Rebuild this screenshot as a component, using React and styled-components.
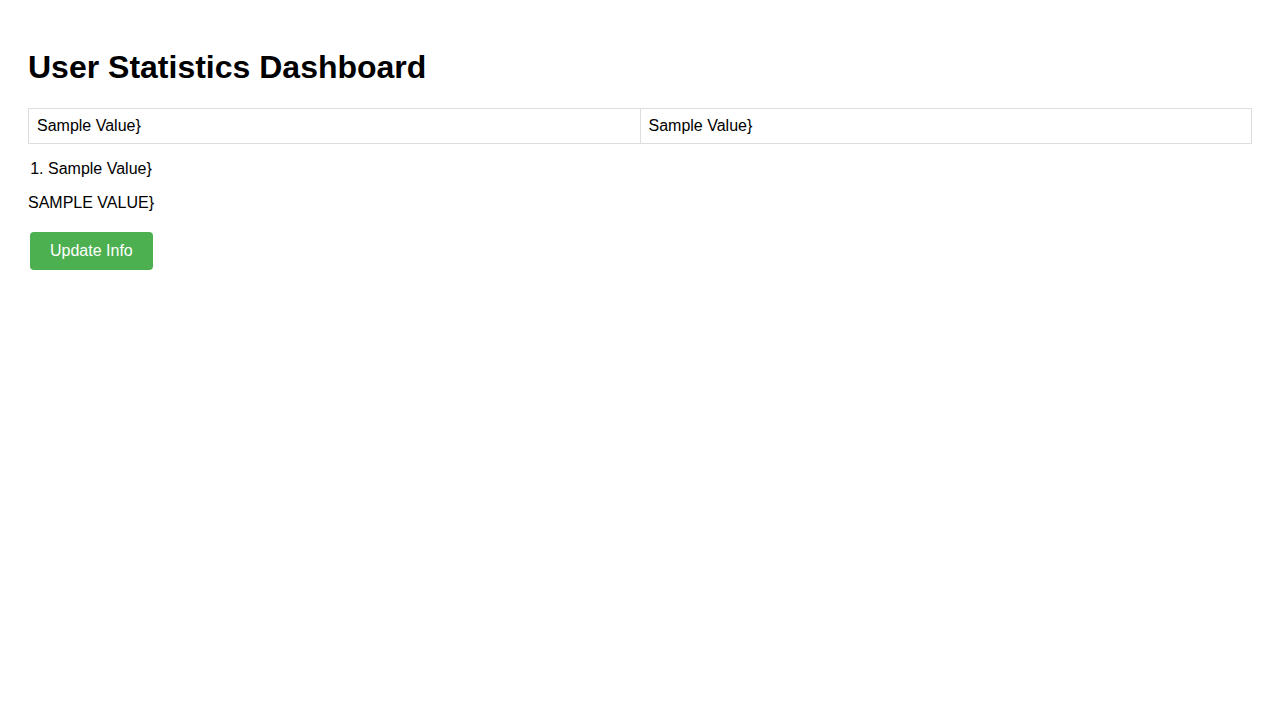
import React from "react";
import styled, { createGlobalStyle } from "styled-components";

const Global = createGlobalStyle`
  body {
    margin: 0;
    background: #ffffff;
    font-family: "Liberation Sans", Arial, sans-serif;
    color: #000;
  }
`;

const Page = styled.div`
  padding: 28px;
`;

const Title = styled.h1`
  font-size: 32px;
  font-weight: bold;
  margin: 21px 0 22px;
  line-height: 37px;
`;

const Table = styled.table`
  width: 100%;
  border-collapse: collapse;
  table-layout: fixed;
`;

const Cell = styled.td`
  border: 1px solid #ddd;
  padding: 8px;
  font-size: 16px;
  line-height: 18px;
`;

const List = styled.ol`
  margin: 16px 0 16px;
  padding-left: 20px;
  font-size: 16px;
  line-height: 18px;
`;

const Upper = styled.p`
  margin: 0;
  text-transform: uppercase;
  font-size: 16px;
  line-height: 18px;
`;

const Button = styled.button`
  margin: 20px 0 0 2px;
  background: #4caf50;
  color: #fff;
  border: none;
  border-radius: 4px;
  padding: 10px 20px;
  font-family: "Liberation Sans", Arial, sans-serif;
  font-size: 16px;
  line-height: 18px;
  cursor: pointer;
`;

export default function App() {
  return (
    <>
      <Global />
      <Page>
        <Title>User Statistics Dashboard</Title>
        <Table>
          <tbody>
            <tr>
              <Cell>Sample Value{"}"}</Cell>
              <Cell>Sample Value{"}"}</Cell>
            </tr>
          </tbody>
        </Table>
        <List>
          <li>Sample Value{"}"}</li>
        </List>
        <Upper>Sample Value{"}"}</Upper>
        <Button>Update Info</Button>
      </Page>
    </>
  );
}
